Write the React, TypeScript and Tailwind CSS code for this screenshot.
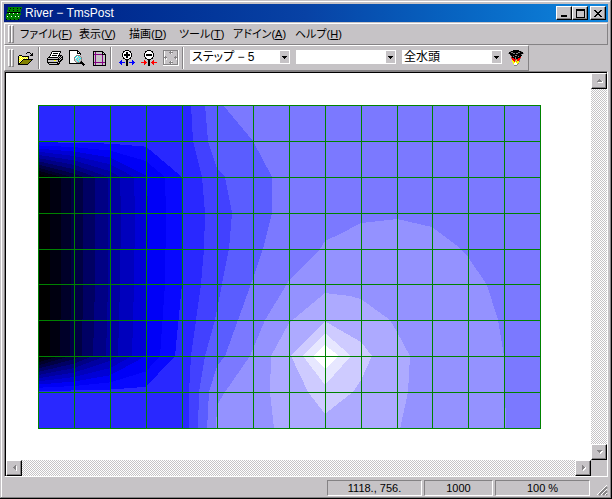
import React from "react";

const FONT = "font-['Liberation_Sans','Noto_Sans_CJK_JP',sans-serif]";
const RAISED =
  "border border-t-white border-l-white border-r-black border-b-black bg-[#c6c3c6] shadow-[inset_-1px_-1px_0_#848284]";
const DITHER =
  "bg-[conic-gradient(#ffffff_25%,#c6c3c6_0_50%,#ffffff_0_75%,#c6c3c6_0)] bg-[length:2px_2px]";

const PALETTE: Record<string, string> = {
  K: "#000000",
  W: "#ffffff",
  Y: "#ffff00",
  L: "#ffff9c",
  O: "#848200",
  G: "#c6c3c6",
  D: "#848284",
  C: "#00ffff",
  P: "#840084",
  R: "#ff0000",
  B: "#0000ff",
  E: "#008200",
  F: "#084510",
};

function Pixels({ rows, label }: { rows: string[]; label?: string }) {
  const width = Math.max(...rows.map((r) => r.length));
  return (
    <svg
      width={width}
      height={rows.length}
      viewBox={`0 0 ${width} ${rows.length}`}
      shapeRendering="crispEdges"
      aria-label={label}
      aria-hidden={label ? undefined : true}
      className="shrink-0"
    >
      {rows.flatMap((row, y) =>
        [...row].map((c, x) =>
          PALETTE[c] ? <rect key={`${x}-${y}`} x={x} y={y} width="1" height="1" fill={PALETTE[c]} /> : null
        )
      )}
    </svg>
  );
}

const APP_ICON = [
  "..EEEEEEEEEEEEEE",
  "..EEKEEKEEEKEEKE",
  "..EEEEEEEEEEEEE.",
  ".EEKEEEKEEEKEEE.",
  ".EEEEEEEEEEEEEE.",
  ".KKKKKKKKKKKKK..",
  ".EEWEEEWEEEWEEE.",
  "EEEEEEEEEEEEEEE.",
  "EEFEEEFEEEFEEE..",
  "EWEEEWEEEWEEWE..",
  "EEEEEEEEEEEEEE..",
  "EEEFEEEFEEEFEE..",
  "KEEEKEEEKEEEK...",
];
const OPEN = [
  "..........KKK...",
  ".........K...K.K",
  "..............KK",
  "..KKK........KKK",
  ".KLYLKKKKKKK....",
  ".KYLYLYLYLYK....",
  ".KLYLYLYLYLK....",
  ".KYLYLKKKKKKKKKK",
  ".KLYLKOOOOOOOOK.",
  ".KYLKOOOOOOOOK..",
  ".KLKOOOOOOOOK...",
  ".KKOOOOOOOOK....",
  ".KKKKKKKKKK.....",
];
const PRINT = [
  ".....KKKKKKKKK..",
  "....KWWWWWWWWK..",
  "....KWKKKKKWK...",
  "...KWWWWWWWWK...",
  "...KWKKKKKWKKKK.",
  "..KWWWWWWWWKGKGK",
  ".KKKKKKKKKKGKGKK",
  "KGGGGGGGGGGKGKGK",
  "KKKKKKKKKKKKKGKK",
  "KGGGGGGYYGGKGKK.",
  "KGGGGGGGGGGKKK..",
  "KKKKKKKKKKKGK...",
  ".KGGGGGGGGKKK...",
  "..KKKKKKKKKK....",
];
const PREVIEW = [
  "KKKKKKKKK.......",
  "KWWWWWWWKK......",
  "KWWWWWWWKWK.....",
  "KWWWWWWWKKKK....",
  "KWWWWWWWWWWK....",
  "KWWWWWWDDDD.....",
  "KWWWWWDCWCGD....",
  "KWWWWDCWGGCGD...",
  "KWWWWDWGCGGCD...",
  "KWWWWDGCGGCGD...",
  "KWWWWDGGCGGGD...",
  "KWWWWWDGGCGDK...",
  "KWWWWWWDDDDKKK..",
  "KKKKKKKKKKKKKKK.",
  ".............KKK",
  "..............K.",
];
const PAGE = [
  "KKKKKKKKKK...",
  "KGPGGGGGGKK..",
  "KGPGGGGGGKGK.",
  "KPPPPPPPPKKKK",
  "KGPGGGGGGPGGK",
  "KGPGGGGGGPGGK",
  "KGPGGGGGGPGGK",
  "KGPGGGGGGPGGK",
  "KGPGGGGGGPGGK",
  "KGPGGGGGGPGGK",
  "KGPGGGGGGPGGK",
  "KPPPPPPPPPPPK",
  "KGPGGGGGGPGGK",
  "KGPGGGGGGPGGK",
  "KKKKKKKKKKKKK",
];
const ZOOM_IN = [
  "......KKKK......",
  "....KKWWWWKK....",
  "....KWWKKWWK....",
  "...KWWWKKWWWK...",
  "...KWKKKKKKWK...",
  "...KWKKKKKKWK...",
  "...KWWWKKWWWK...",
  "....KWWKKWWK....",
  "....KKWWWWKK....",
  "......KKKK......",
  "..B....KK....B..",
  ".BB....KK....BB.",
  "BBBBBB.KK.BBBBBB",
  ".BB....KK....BB.",
  "..B....KK....B..",
  ".......KK.......",
];
const ZOOM_OUT = [
  "......KKKK......",
  "....KKWWWWKK....",
  "....KWWWWWWK....",
  "...KWWWWWWWWK...",
  "...KWKKKKKKWK...",
  "...KWKKKKKKWK...",
  "...KWWWWWWWWK...",
  "....KWWWWWWK....",
  "....KKWWWWKK....",
  "......KKKK......",
  "...R...KK...R...",
  "...RR..KK..RR...",
  "RRRRRR.KK.RRRRRR",
  "...RR..KK..RR...",
  "...R...KK...R...",
  ".......KK.......",
];
const FIT = [
  "DDDDDDDDDDDDDDDW",
  "DW.....DW.....DW",
  "DW....DDDD....DW",
  "DW.....DW.....DW",
  "DW............DW",
  "DW............DW",
  "DWD.........D.DW",
  "DDDD.......DDDDW",
  "DWDW........DWDW",
  "DW.W.........WDW",
  "DW............DW",
  "DW.....DW.....DW",
  "DW....DDDD....DW",
  "DW.....DW.....DW",
  "DDDDDDDDDDDDDDDW",
  "WWWWWWWWWWWWWWWW",
];
const POST = [
  ".....KKKKKK.....",
  "..DKKKKKKKKKKD..",
  ".KKDDKKKKKDDKKK.",
  "DKKKKDDKDDKKKKKD",
  "..KKKKKKKKKKKD..",
  "..DKKKKDDKKKKK..",
  "...DKDKKKKDKK...",
  "...RKKKDKKKKR...",
  "...DRRKDKKRRD...",
  "....RRRRDRRR....",
  "....YRRDYRRD....",
  "....YYRYDYYD....",
  ".....YYWYYY.....",
  ".....YWWWYD.....",
  "......WWWD......",
  "......DDD.......",
];

function Title() {
  const button = `${RAISED} flex h-[14px] w-4 items-center justify-center`;
  return (
    <header className="flex h-[18px] items-center bg-linear-to-r from-[#001c84] via-[#0842a5] to-[#1086de] px-0.5">
      <Pixels rows={APP_ICON} />
      <h1 className="ml-[3px] flex-1 text-xs leading-4 whitespace-nowrap text-white">River − TmsPost</h1>
      <button className={button} aria-label="Minimize">
        <Pixels rows={["........", "........", "........", "........", "........", ".KKKKKK.", ".KKKKKK."]} />
      </button>
      <button className={button} aria-label="Maximize">
        <Pixels
          rows={["KKKKKKKKK", "KKKKKKKKK", "K.......K", "K.......K", "K.......K", "K.......K", "K.......K", "K.......K", "KKKKKKKKK"]}
        />
      </button>
      <button className={`${button} ml-0.5`} aria-label="Close">
        <Pixels rows={["KK....KK", ".KK..KK.", "..KKKK..", "...KK...", "..KKKK..", ".KK..KK.", "KK....KK"]} />
      </button>
    </header>
  );
}

function Gripper() {
  const bar = "w-[3px] border border-t-white border-r-[#848284] border-b-[#848284] border-l-white";
  return (
    <span className="flex h-[18px] shrink-0">
      <span className={bar} />
      <span className={bar} />
    </span>
  );
}

const MENUS = [
  { name: "ファイル", key: "F", width: "w-[59px]" },
  { name: "表示", key: "V", width: "w-[50px]" },
  { name: "描画", key: "D", width: "w-[50px]" },
  { name: "ツール", key: "T", width: "w-[54px]" },
  { name: "アドイン", key: "A", width: "w-[62px]" },
  { name: "ヘルプ", key: "H", width: "w-[54px]" },
];

function MenuBar() {
  return (
    <nav className="flex h-[22px] items-center border border-t-white border-r-[#848284] border-b-[#848284] border-l-white pl-[3px]">
      <Gripper />
      <div className="ml-1.5 flex text-[11px] leading-4 [font-feature-settings:'palt']">
        {MENUS.map((m) => (
          <button key={m.key} className={`${m.width} text-left whitespace-nowrap`}>
            {m.name}(<u>{m.key}</u>)
          </button>
        ))}
      </div>
    </nav>
  );
}

function Separator() {
  return <span className="h-[22px] w-0.5 shrink-0 border-r border-l border-r-white border-l-[#848284]" />;
}

function Tool({ rows, label, disabled }: { rows: string[]; label: string; disabled?: boolean }) {
  return (
    <button aria-label={label} disabled={disabled} className="flex h-[22px] w-[22px] shrink-0 items-center justify-center">
      <Pixels rows={rows} />
    </button>
  );
}

function Combo({ label, value }: { label: string; value: string }) {
  return (
    <span className="relative mb-0.5 block h-[14px] w-[100px] shrink-0 bg-white">
      <select
        aria-label={label}
        defaultValue={value}
        className="block h-[14px] w-full appearance-none bg-transparent pl-0.5 text-xs leading-[14px] text-black [font-feature-settings:'palt']"
      >
        <option>{value}</option>
      </select>
      <span className="pointer-events-none absolute top-px right-px flex h-3 w-[9px] items-center justify-center bg-[#c6c3c6]">
        <Pixels rows={["KKKKK", ".KKK.", "..K.."]} />
      </span>
    </span>
  );
}

function ToolBar() {
  return (
    <div className="flex h-[26px] w-[525px] items-center border border-t-white border-r-[#848284] border-b-[#848284] border-l-white pl-[3px]">
      <Gripper />
      <div className="flex items-center">
        <Tool rows={OPEN} label="開く" />
        <span className="w-0.5" />
        <Separator />
        <span className="w-1" />
        <Tool rows={PRINT} label="印刷" />
        <Tool rows={PREVIEW} label="印刷プレビュー" />
        <Tool rows={PAGE} label="ページ設定" />
        <Separator />
        <span className="w-1" />
        <Tool rows={ZOOM_IN} label="拡大" />
        <Tool rows={ZOOM_OUT} label="縮小" />
        <Tool rows={FIT} label="全体表示" disabled />
        <Separator />
      </div>
      <div className="ml-1.5 flex items-center gap-1.5">
        <Combo label="ステップ" value="ステップ − 5" />
        <Combo label="成分" value="" />
        <Combo label="物理量" value="全水頭" />
      </div>
      <span className="w-[3px]" />
      <Tool rows={POST} label="ポスト" />
    </div>
  );
}

const GRID_X = [38, 74, 110, 146, 182, 217, 253, 289, 325, 361, 397, 432, 468, 504, 540];
const GRID_Y = [105, 141, 177, 213, 249, 284, 320, 356, 392, 428];

// Filled regions of the head distribution, widest first.
const REGIONS: [string, string][] = [
  ["#5a5dff", "38,105 223,105 253,141 272,177 272,213 263,249 251,284 238,320 225,356 217,366 209,392 207,429 38,429"],
  ["#4241ff", "38,105 205,105 208,141 217,169 225,177 232,213 229,249 222,284 215,320 205,356 199,392 198,429 38,429"],
  ["#2928ff", "38,105 191,105 193,141 202,177 205,213 204,249 201,284 196,320 191,356 189,392 189,429 38,429"],
  [
    "#9492ff",
    "216,429 217,405 225,392 250,356 265,320 287,284 289,280 320,249 325,241 340,234 361,223 397,219 432,227 460,248 468,257 487,285 498,320 504,356 505,386 506,429",
  ],
  [
    "#adaaff",
    "274,429 270,392 271,356 289,323 325,293 350,296 361,299 390,320 397,332 410,356 408,392 400,429",
  ],
  ["#cecbff", "325,321 340,330 361,342 372,356 361,380 353,392 340,402 325,414 308,392 291,356"],
  ["#e7e7ff", "325,333 351,356 325,385 303,356"],
  ["#ffffff", "325,345 339,356 325,369 313,356"],
];

const BANDS = [
  "#0808ff", "#0000f7", "#0000d6", "#0000bd", "#0000a0", "#000084", "#000063", "#000042", "#000029", "#000010", "#000000",
];
const UPPER = [50, 61, 71, 83, 95, 108, 120, 134, 147, 165, 182];
const MIDDLE = [50, 61, 71, 83, 95, 108, 121, 135, 148, 166, 183];
const LOWER = [50, 60, 70, 82, 93, 106, 118, 132, 146, 160, 175];

// Where contour `level` crosses each grid column between the flat outer row and the inner row.
function fan(level: number, outer: number, inner: number, flat: number, values: number[]) {
  return values
    .map((v, i) => ({ v, x: GRID_X[i] }))
    .filter((p) => p.v < level)
    .map((p) => `${p.x},${outer + ((inner - outer) * (flat - level)) / (flat - p.v)}`);
}

function bandPoints(level: number) {
  const i = level - 1;
  return [
    ...fan(level, 141, 177, 11.39, [0, 3.25, 6.15, 8.9]),
    `${UPPER[i]},177`,
    `${MIDDLE[i]},213`,
    `${UPPER[i]},284`,
    `${LOWER[i]},356`,
    ...fan(level, 392, 356, 11.34, [0, 3.3, 6.3, 9]).reverse(),
  ].join(" ");
}

function Contour() {
  return (
    <svg viewBox="38 105 503 324" shapeRendering="crispEdges" className="block h-auto w-full" role="img" aria-label="全水頭">
      <rect x="38" y="105" width="503" height="324" fill="#7b79ff" />
      {REGIONS.map(([fill, points]) => (
        <polygon key={fill} fill={fill} points={points} />
      ))}
      {BANDS.map((fill, i) => (
        <polygon key={fill} fill={fill} points={bandPoints(11 - i)} />
      ))}
      {GRID_X.map((x) => (
        <rect key={`x${x}`} x={x} y="105" width="1" height="324" fill="#008200" />
      ))}
      {GRID_Y.map((y) => (
        <rect key={`y${y}`} x="38" y={y} width="503" height="1" fill="#008200" />
      ))}
    </svg>
  );
}

const UP = ["...D...", "..DDD..", ".DDDDDW", "..WWWWW"];
const DOWN = [".DDDDD.", "..DDDWW", "...DWW.", "....W.."];
const LEFT = ["...D.", "..DDW", ".DDDW", "..DDW", "...DW", "....W"];
const RIGHT = [".D...", ".DD..", ".DDDW", ".DDWW", ".DWW.", "..W.."];

function ScrollButton({ rows, label }: { rows: string[]; label: string }) {
  return (
    <button aria-label={label} className={`${RAISED} flex h-4 w-4 shrink-0 items-center justify-center`}>
      <Pixels rows={rows} />
    </button>
  );
}

function View() {
  return (
    <main className="flex min-h-0 flex-1 border border-t-[#848284] border-r-white border-b-white border-l-[#848284] bg-[#c6c3c6]">
      <div className="grid min-h-0 flex-1 grid-cols-[1fr_16px] grid-rows-[1fr_16px] border-t border-l border-black">
        <div className="overflow-hidden bg-white pt-8 pr-[50px] pl-8">
          <Contour />
        </div>
        <div className={`${DITHER} flex flex-col justify-between`}>
          <ScrollButton rows={UP} label="上へ" />
          <ScrollButton rows={DOWN} label="下へ" />
        </div>
        <div className={`${DITHER} flex justify-between`}>
          <ScrollButton rows={LEFT} label="左へ" />
          <ScrollButton rows={RIGHT} label="右へ" />
        </div>
        <div />
      </div>
    </main>
  );
}

function StatusBar() {
  const pane = "h-4 border border-t-[#848284] border-r-white border-b-white border-l-[#848284] text-center leading-[14px]";
  return (
    <footer className="flex h-5 items-end justify-end gap-0.5 pb-px text-[11px]">
      <span className={`${pane} w-[95px]`}>1118., 756.</span>
      <span className={`${pane} w-[69px]`}>1000</span>
      <span className={`${pane} w-[95px]`}>100 %</span>
      <svg width="16" height="16" viewBox="0 0 16 16" aria-hidden="true">
        <path d="M7 15L15 7M11 15L15 11M14 15L15 14" stroke="#848284" strokeWidth="2" />
        <path d="M5 15L15 5M9 15L15 9M13 15L15 13" stroke="#ffffff" />
      </svg>
    </footer>
  );
}

export default function App() {
  return (
    <div className={`${FONT} flex h-screen flex-col border-r border-b border-black bg-[#c6c3c6] text-black`}>
      <div className="flex min-h-0 flex-1 flex-col border border-t-[#c6c3c6] border-r-[#848284] border-b-[#848284] border-l-[#c6c3c6]">
        <div className="flex min-h-0 flex-1 flex-col border-t border-l border-white pt-0.5 pr-0.5 pl-0.5">
          <Title />
          <div className="pt-px">
            <MenuBar />
            <ToolBar />
          </div>
          <View />
          <StatusBar />
        </div>
      </div>
    </div>
  );
}
